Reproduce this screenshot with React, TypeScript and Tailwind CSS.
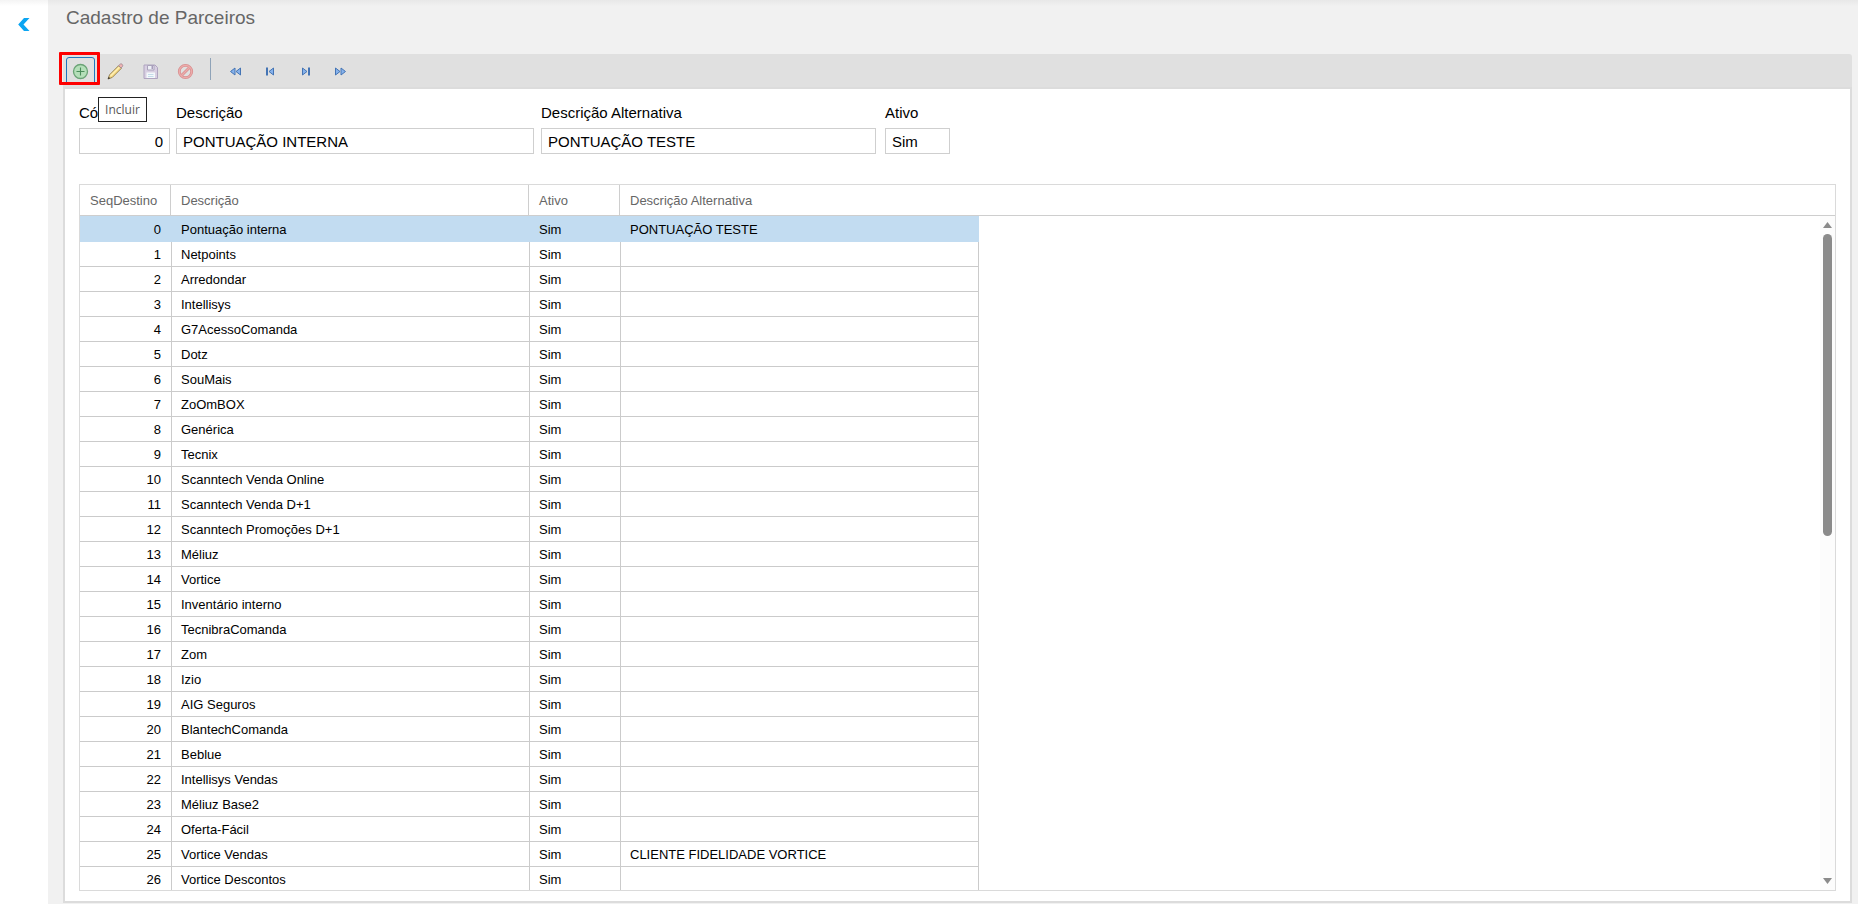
import { useState } from "react";
import type { ReactNode } from "react";

interface Partner {
  name: string;
  alternative?: string;
}

// SeqDestino is the position in the list
const partners: Partner[] = [
  { name: "Pontuação interna", alternative: "PONTUAÇÃO TESTE" },
  { name: "Netpoints" },
  { name: "Arredondar" },
  { name: "Intellisys" },
  { name: "G7AcessoComanda" },
  { name: "Dotz" },
  { name: "SouMais" },
  { name: "ZoOmBOX" },
  { name: "Genérica" },
  { name: "Tecnix" },
  { name: "Scanntech Venda Online" },
  { name: "Scanntech Venda D+1" },
  { name: "Scanntech Promoções D+1" },
  { name: "Méliuz" },
  { name: "Vortice" },
  { name: "Inventário interno" },
  { name: "TecnibraComanda" },
  { name: "Zom" },
  { name: "Izio" },
  { name: "AIG Seguros" },
  { name: "BlantechComanda" },
  { name: "Beblue" },
  { name: "Intellisys Vendas" },
  { name: "Méliuz Base2" },
  { name: "Oferta-Fácil" },
  { name: "Vortice Vendas", alternative: "CLIENTE FIDELIDADE VORTICE" },
  { name: "Vortice Descontos" },
];

const AddIcon = () => (
  <svg width="17" height="17" viewBox="0 0 17 17" fill="none">
    <circle cx="8.5" cy="8.5" r="7" fill="#b5dfb9" stroke="#6ba376" strokeWidth="1.3" />
    <path d="M8.5 4.5v8M4.5 8.5h8" stroke="#4b8d5b" strokeWidth="1.1" />
  </svg>
);

const EditIcon = () => (
  <svg width="17" height="17" viewBox="0 0 17 17" fill="none">
    <path d="M1 16l1.6-4.300L11.600 2.700l2.700 2.700-9 9z" fill="#f8dc85" stroke="#8d7a52" strokeWidth="0.9" />
    <path d="M3.5 13L12.500 4" stroke="#fff0b8" strokeWidth="1.1" />
    <path d="M11.600 2.700L13.200 1.200c.6-.5 1.300-.4 1.900.1.800.7.800 1.500.3 2.200l-1.400 1.600z" fill="#efb3b3" stroke="#9a8590" strokeWidth="0.8" />
    <path d="M.800 16.200l.9-2.400 1.600 1.500z" fill="#3f3a33" />
  </svg>
);

const SaveIcon = () => (
  <svg width="17" height="17" viewBox="0 0 17 17" fill="none">
    <path d="M2 2h11L15.500 4.500V15.500H2z" fill="#d8cfe2" stroke="#afa4c0" />
    <path d="M5.500 2.500h6.500v4.500H5.500z" fill="#eef0f6" stroke="#aaa3bb" />
    <path d="M9.500 3h1.500v3H9.500z" fill="#a79bbb" />
    <path d="M4.500 9.500h8.500V15H4.500z" fill="#f4f8fb" />
    <path d="M6 11.500h5.500M6 13.500h5.500" stroke="#c4dbea" />
  </svg>
);

const CancelIcon = () => (
  <svg width="17" height="17" viewBox="0 0 17 17" fill="none">
    <circle cx="8.500" cy="8.500" r="6.200" stroke="#d88e8e" strokeWidth="2.800" />
    <path d="M4.500 12.500l8-8" stroke="#d88e8e" strokeWidth="2.800" />
    <circle cx="8.500" cy="8.500" r="6.200" stroke="#ecabab" strokeWidth="1.300" />
    <path d="M4.300 12.700l8.400-8.400" stroke="#ecabab" strokeWidth="1.300" />
  </svg>
);

const RewindIcon = () => (
  <svg width="13" height="9" viewBox="0 0 13 9" fill="#86b2ec" stroke="#4474b4">
    <path d="M6 1v7L1.500 4.500zM11.500 1v7L7 4.500z" />
  </svg>
);

const PreviousIcon = () => (
  <svg width="9" height="9" viewBox="0 0 9 9" fill="#86b2ec" stroke="#4474b4">
    <path d="M7.500 1v7L3 4.500z" />
    <path d="M1 .5v8" strokeWidth="2" />
  </svg>
);

const NextIcon = () => (
  <svg width="9" height="9" viewBox="0 0 9 9" fill="#86b2ec" stroke="#4474b4">
    <path d="M1.500 1v7L6 4.500z" />
    <path d="M8 .5v8" strokeWidth="2" />
  </svg>
);

const ForwardIcon = () => (
  <svg width="13" height="9" viewBox="0 0 13 9" fill="#86b2ec" stroke="#4474b4">
    <path d="M1.500 1v7L6 4.500zM7 1v7l4.500-3.500z" />
  </svg>
);

interface ToolButtonProps {
  label: string;
  active?: boolean;
  children: ReactNode;
}

const ToolButton = ({ label, active, children }: ToolButtonProps) => (
  <button
    type="button"
    aria-label={label}
    className={`flex h-[28px] w-[29px] items-center justify-center rounded-[3px] border ${
      active ? "border-[#1f76bd]" : "border-transparent"
    }`}
  >
    {children}
  </button>
);

interface FieldProps {
  id: string;
  label: string;
  value: string;
  width: string;
  alignRight?: boolean;
}

const Field = ({ id, label, value, width, alignRight }: FieldProps) => (
  <div className={`flex flex-col gap-[5px] ${width}`}>
    <label htmlFor={id} className="text-[15px] leading-5 whitespace-nowrap">
      {label}
    </label>
    <input
      id={id}
      readOnly
      value={value}
      className={`h-[26px] w-full border border-[#cfcfcf] bg-white px-1.5 text-[15px] outline-none ${
        alignRight ? "text-right" : ""
      }`}
    />
  </div>
);

export default function App() {
  const [selected, setSelected] = useState(0);

  return (
    <div className="flex h-screen bg-[#f1f1f1] font-['Liberation_Sans',Arial,sans-serif] text-black">
      <aside className="w-12 shrink-0 bg-gradient-to-b from-[#f4f4f4] to-white to-[6px] pt-[17px] pl-[18px]">
        <button type="button" aria-label="Voltar" className="block">
          <svg width="12" height="15" viewBox="0 0 12 15" fill="#0ba5f2">
            <path d="M6 1h5.500L5.500 7.500l6 6.500H6L.2 7.500z" />
          </svg>
        </button>
      </aside>

      <main className="flex min-w-0 flex-1 flex-col bg-gradient-to-b from-[#e8e8e8] to-[#f1f1f1] to-[6px] pr-1.5 pb-px pl-[15px]">
        <h1 className="h-[54px] pt-1.5 pl-[3px] text-[19px] leading-6 text-[#666]">Cadastro de Parceiros</h1>

        <div role="toolbar" className="relative flex h-[35px] shrink-0 gap-1.5 rounded-t-[3px] border-b-2 border-[#dcdcdc] bg-[#e0e0e0] px-[3px] pt-[3px]">
          <ToolButton label="Incluir" active><AddIcon /></ToolButton>
          <ToolButton label="Editar"><EditIcon /></ToolButton>
          <ToolButton label="Salvar"><SaveIcon /></ToolButton>
          <ToolButton label="Cancelar"><CancelIcon /></ToolButton>
          <div className="flex w-[9px] justify-center pt-px">
            <span className="h-[22px] w-px bg-[#8fa3b8]" />
          </div>
          <ToolButton label="Primeiro"><RewindIcon /></ToolButton>
          <ToolButton label="Anterior"><PreviousIcon /></ToolButton>
          <ToolButton label="Próximo"><NextIcon /></ToolButton>
          <ToolButton label="Último"><ForwardIcon /></ToolButton>

          {/* Destaque e dica do botão Incluir */}
          <span className="pointer-events-none absolute -top-0.5 -left-1 h-[33px] w-[41px] rounded-[1px] border-3 border-[#fe0000]" />
          <span role="tooltip" className="absolute top-[43px] left-[35px] z-10 flex h-[25px] w-[49px] items-center justify-center border border-[#222] bg-white font-['Open_Sans','Noto_Sans',sans-serif] text-[12px] text-[#575757]">
            Incluir
          </span>
        </div>

        <section className="flex min-h-0 flex-1 flex-col border-x-2 border-b-2 border-[#dcdcdc] bg-white px-3.5 pt-3.5 pb-2.5">
          <form className="flex">
            <Field id="codigo" label="Código" value="0" width="w-[91px] mr-1.5" alignRight />
            <Field id="descricao" label="Descrição" value="PONTUAÇÃO INTERNA" width="w-[358px] mr-[7px]" />
            <Field id="alternativa" label="Descrição Alternativa" value="PONTUAÇÃO TESTE" width="w-[335px] mr-[9px]" />
            <Field id="ativo" label="Ativo" value="Sim" width="w-[65px]" />
          </form>

          <div className="mt-[30px] flex min-h-0 flex-1 flex-col border border-[#dadada] text-[13px]">
            <table className="w-full shrink-0 table-fixed border-separate border-spacing-0">
              <thead>
                <tr className="h-[31px] text-left text-[#666] [&>th]:border-b [&>th]:border-[#cecece] [&>th]:px-2.5 [&>th]:pt-0.5 [&>th]:font-normal">
                  <th className="w-[91px] border-r">SeqDestino</th>
                  <th className="w-[358px] border-r">Descrição</th>
                  <th className="w-[91px] border-r">Ativo</th>
                  <th>Descrição Alternativa</th>
                </tr>
              </thead>
            </table>

            <div className="flex min-h-0 flex-1">
              <div className="min-w-0 flex-1 overflow-hidden">
                <table className="w-[899px] table-fixed border-separate border-spacing-0">
                  <colgroup>
                    <col className="w-[92px]" />
                    <col className="w-[358px]" />
                    <col className="w-[91px]" />
                    <col className="w-[358px]" />
                  </colgroup>
                  <tbody>
                    {partners.map((partner, index) => (
                      <tr
                        key={partner.name}
                        onClick={() => setSelected(index)}
                        className={`[&>td]:border-r [&>td]:border-b [&>td]:pt-0.5 [&>td]:pr-2.5 [&>td]:pl-[9px] ${
                          index === selected
                            ? "h-[26px] bg-[#c2dcf1] [&>td]:border-[#c2dcf1]"
                            : "h-[25px] [&>td]:border-[#cbcbcb]"
                        }`}
                      >
                        <td className="text-right">{index}</td>
                        <td>{partner.name}</td>
                        <td>Sim</td>
                        <td>{partner.alternative}</td>
                      </tr>
                    ))}
                  </tbody>
                </table>
              </div>

              <div className="flex w-[15px] shrink-0 flex-col items-center justify-between bg-[#fcfcfc] pt-1.5 pb-1.5">
                <div className="flex h-1/2 flex-col items-center gap-1.5">
                  <svg width="9" height="6" viewBox="0 0 9 6" fill="#8b8b8b" className="shrink-0">
                    <path d="M4.500 0L9 6H0z" />
                  </svg>
                  <span className="h-[302px] w-[9px] rounded-full bg-[#8b8b8b]" />
                </div>
                <svg width="9" height="6" viewBox="0 0 9 6" fill="#8b8b8b">
                  <path d="M0 0h9L4.500 6z" />
                </svg>
              </div>
            </div>
          </div>
        </section>
      </main>
    </div>
  );
}
